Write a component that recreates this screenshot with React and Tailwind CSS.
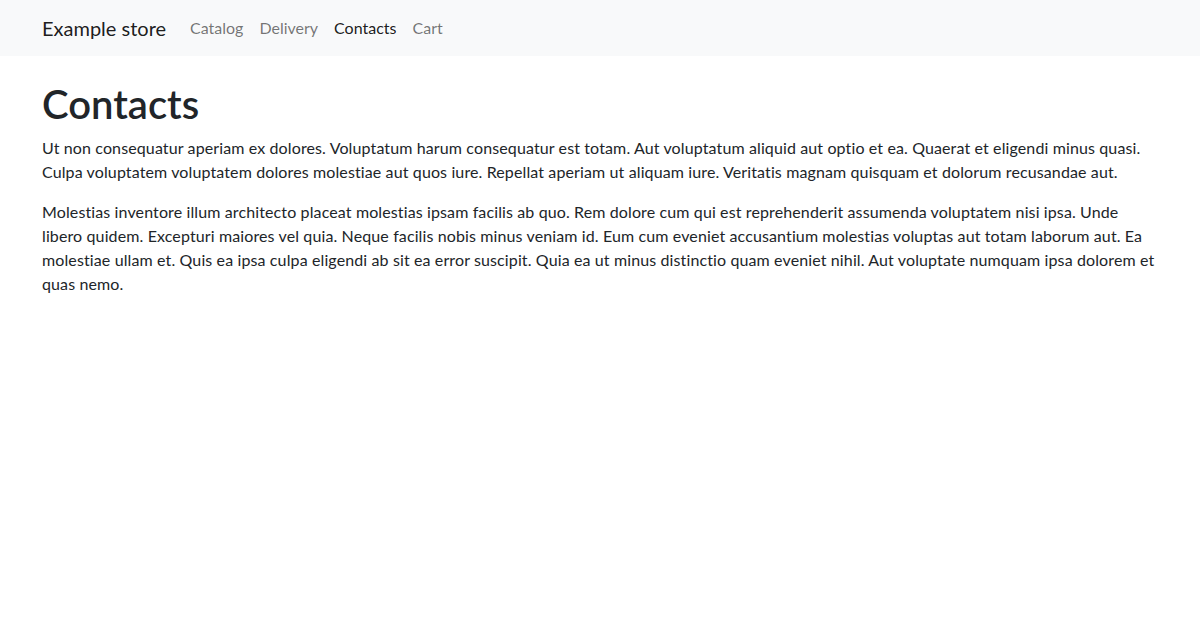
import React from 'react';

const links = [
    { label: 'Catalog', active: false },
    { label: 'Delivery', active: false },
    { label: 'Contacts', active: true },
    { label: 'Cart', active: false },
];

const App = () => {
    return (
        <div className="min-h-screen bg-white text-[#212529] font-['Segoe_UI',Lato,'Liberation_Sans',sans-serif] text-base leading-6">
            {/* Navbar */}
            <nav className="bg-[#f8f9fa] py-2">
                <div className="max-w-[1140px] mx-auto px-3 flex items-center">
                    <a href="#" className="text-xl leading-[30px] py-[5px] mr-4 text-black/90">
                        Example store
                    </a>
                    <ul className="flex">
                        {links.map((l) => (
                            <li key={l.label}>
                                <a
                                    href="#"
                                    className={`block px-2 py-2 ${l.active ? 'text-black/90' : 'text-black/55'}`}
                                >
                                    {l.label}
                                </a>
                            </li>
                        ))}
                    </ul>
                </div>
            </nav>

            {/* Content */}
            <main className="max-w-[1140px] mx-auto px-3 pt-6">
                <h1 className="text-[40px] leading-[48px] font-semibold mb-2">Contacts</h1>
                <div className="tracking-[0.12px]">
                    <p className="mb-4">
                        Ut non consequatur aperiam ex dolores. Voluptatum harum consequatur est totam. Aut voluptatum aliquid aut optio et ea. Quaerat et eligendi minus quasi. Culpa voluptatem voluptatem dolores molestiae aut quos iure. Repellat aperiam ut aliquam iure. Veritatis magnam quisquam et dolorum recusandae aut.
                    </p>
                    <p className="mb-4">
                        Molestias inventore illum architecto placeat molestias ipsam facilis ab quo. Rem dolore cum qui est reprehenderit assumenda voluptatem nisi ipsa. Unde libero quidem. Excepturi maiores vel quia. Neque facilis nobis minus veniam id. Eum cum eveniet accusantium molestias voluptas aut totam laborum aut. Ea molestiae ullam et. Quis ea ipsa culpa eligendi ab sit ea error suscipit. Quia ea ut minus distinctio quam eveniet nihil. Aut voluptate numquam ipsa dolorem et quas nemo.
                    </p>
                </div>
            </main>
        </div>
    );
};

export default App;
